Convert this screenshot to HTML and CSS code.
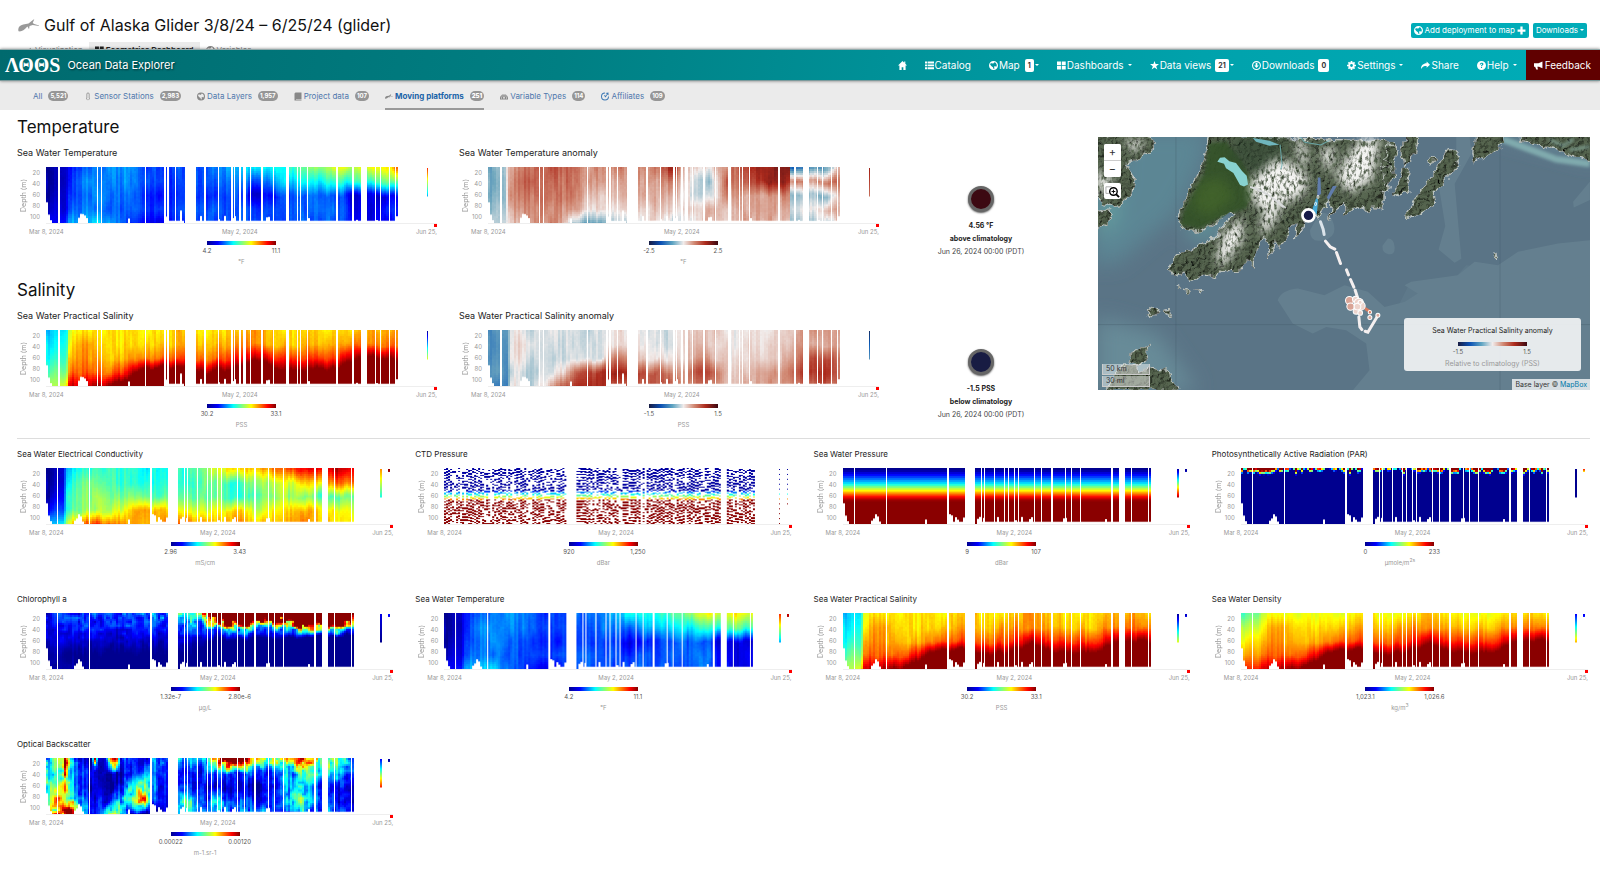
FILE: index.html
```html
<!DOCTYPE html>
<html lang="en">
<head>
<meta charset="utf-8">
<title>Gulf of Alaska Glider – Ocean Data Explorer</title>
<link rel="stylesheet" href="styles.css">
</head>
<body>
<svg class="sprite" aria-hidden="true">
  <symbol id="i-glider" viewBox="0 0 40 24"><path d="M1 23C-1 17 3 11 10 10l10-2 9-7 2-1-3 7 3 2 9 3v1l-12-2-6 2-1 6-3-5-2 2c-4 5-9 8-15 7z"/></symbol>
  <symbol id="i-home" viewBox="0 0 16 16"><path d="M8 0L0 8h2.500v8h4v-5h3v5h4V8H16l-3-3V1h-2v2z"/></symbol>
  <symbol id="i-list" viewBox="0 0 16 16"><path d="M0 1h4v3.500H0zM5 1h11v3.500H5zM0 6h4v3.500H0zM5 6h11v3.500H5zM0 11h4v3.500H0zM5 11h11v3.500H5z"/></symbol>
  <symbol id="i-globe" viewBox="0 0 16 16"><path fill-rule="evenodd" d="M8 0a8 8 0 100 16A8 8 0 008 0zm1 2l3 1 2 4-1 3-3-1-1 2 1 2-2 1-1-3-3-2-2-3 1-2 3 0 1 1 2-2z"/></symbol>
  <symbol id="i-grid" viewBox="0 0 16 16"><path d="M0 1h7v6.500H0zM8.500 1h7v6.500h-7zM0 9h7v6H0zM8.500 9h7v6h-7z"/></symbol>
  <symbol id="i-star" viewBox="0 0 16 16"><path d="M8 0l2 5.500h6l-5 3.700 2 6L8 11.500 3 15.200l2-6-5-3.700h6z"/></symbol>
  <symbol id="i-down" viewBox="0 0 16 16"><path fill-rule="evenodd" d="M8 0a8 8 0 100 16A8 8 0 008 0zm0 2a6 6 0 110 12A6 6 0 018 2zM6.500 3.500v4.500H4l4 4.500L12 8H9.500V3.500z"/></symbol>
  <symbol id="i-gear" viewBox="0 0 16 16"><path fill-rule="evenodd" d="M6.500 0h3v2.200l1.300.6 1.600-1.600 2.200 2.200L13 5l.6 1.500H16v3h-2.400L13 11l1.600 1.600-2.200 2.200-1.600-1.600-1.300.6V16h-3v-2.200l-1.300-.6-1.600 1.600-2.200-2.200L3 11l-.6-1.500H0v-3h2.400L3 5 1.400 3.400l2.200-2.200 1.600 1.600 1.300-.6zM8 5.500a2.500 2.500 0 100 5 2.500 2.500 0 000-5z"/></symbol>
  <symbol id="i-share" viewBox="0 0 16 16"><path d="M10 1l6 5.500-6 5.500V9C5 9 3 10 0 14c0-6 4-10 10-10z"/></symbol>
  <symbol id="i-help" viewBox="0 0 16 16"><path fill-rule="evenodd" d="M8 0a8 8 0 100 16A8 8 0 008 0zM5 6c0-4 6.500-4 6.500-.5 0 2-2.500 2-2.500 4H7C7 7 9 7 9 5.700c0-1.200-2-1.200-2 .3zm2 4.500h2v2H7z"/></symbol>
  <symbol id="i-horn" viewBox="0 0 16 16"><path d="M15 1v12l-6-3H6l1 5H4l-2-5H0V4h8z"/></symbol>
  <symbol id="i-plus" viewBox="0 0 16 16"><path d="M6 1h4v5h5v4h-5v5H6v-5H1V6h5z"/></symbol>
  <symbol id="i-thermo" viewBox="0 0 16 16"><path fill-rule="evenodd" d="M5 3a3 3 0 016 0v7a3.500 3.500 0 11-6 0zm1.500 0v8a2 2 0 103 0V3a1.500 1.500 0 00-3 0z"/></symbol>
  <symbol id="i-book" viewBox="0 0 16 16"><path d="M3 0h12v13H4v1h11v2H1V2z"/></symbol>
  <symbol id="i-gauge" viewBox="0 0 16 16"><path fill-rule="evenodd" d="M0 14C-2 0 18 0 16 14zM7 4h2v2H7zM3 6h2v2H3zM11 6h2v2h-2zM7 8h2l1 4H6zM2 10h2v2H2zM12 10h2v2h-2z"/></symbol>
  <symbol id="i-clock" viewBox="0 0 16 16"><path fill-rule="evenodd" d="M8 0a8 8 0 108 8h-2a6 6 0 11-6-6zM9 1l6-1v6l-2-2-4 6-3-4 2-1 1 2 3-4z"/></symbol>
</svg>

<header class="page-head">
  <svg class="glider"><use href="#i-glider"/></svg>
  <h1>Gulf of Alaska Glider 3/8/24 – 6/25/24 (glider)</h1>
  <div class="actions">
    <button class="action"><svg class="ico"><use href="#i-globe"/></svg>Add deployment to map<svg class="ico"><use href="#i-plus"/></svg></button>
    <button class="action">Downloads<i class="caret"></i></button>
  </div>
</header>
<nav class="tabs">
  <a href="#vis"><svg class="ico"><use href="#i-glider"/></svg>Visualization</a>
  <a href="#eco" class="on"><svg class="ico"><use href="#i-grid"/></svg>Ecometrics Dashboard</a>
  <a href="#var"><svg class="ico"><use href="#i-globe"/></svg>Variables</a>
</nav>

<nav class="navbar">
  <a class="brand" href="#home"><span class="logo">ΛΘΘS</span>Ocean Data Explorer</a>
  <div class="menu">
    <a href="#home" aria-label="Home"><svg class="ico"><use href="#i-home"/></svg></a>
    <a href="#catalog"><svg class="ico"><use href="#i-list"/></svg>Catalog</a>
    <a href="#map"><svg class="ico"><use href="#i-globe"/></svg>Map<b class="num far">1</b><i class="caret"></i></a>
    <a href="#dash"><svg class="ico"><use href="#i-grid"/></svg>Dashboards<i class="caret gap"></i></a>
    <a href="#views"><svg class="ico"><use href="#i-star"/></svg>Data views<b class="num">21</b><i class="caret"></i></a>
    <a href="#dl"><svg class="ico"><use href="#i-down"/></svg>Downloads<b class="num">0</b></a>
    <a href="#set"><svg class="ico"><use href="#i-gear"/></svg>Settings<i class="caret gap"></i></a>
    <a href="#share"><svg class="ico"><use href="#i-share"/></svg>Share</a>
    <a href="#help"><svg class="ico"><use href="#i-help"/></svg>Help<i class="caret gap"></i></a>
    <a href="#feedback" class="feedback"><svg class="ico"><use href="#i-horn"/></svg>Feedback</a>
  </div>
</nav>

<nav class="subnav">
  <a href="#all">All<b>5,521</b></a>
  <a href="#sensor"><svg class="ico"><use href="#i-thermo"/></svg>Sensor Stations<b>2,983</b></a>
  <a href="#layers"><svg class="ico"><use href="#i-globe"/></svg>Data Layers<b>1,957</b></a>
  <a href="#project"><svg class="ico"><use href="#i-book"/></svg>Project data<b>107</b></a>
  <a href="#moving" class="on"><svg class="ico"><use href="#i-glider"/></svg>Moving platforms<b>251</b></a>
  <a href="#types"><svg class="ico"><use href="#i-gauge"/></svg>Variable Types<b>114</b></a>
  <a href="#affil"><svg class="ico clock"><use href="#i-clock"/></svg>Affiliates<b>109</b></a>
</nav>

<main>
  <div class="overview">
    <div class="sections">
      <section>
        <h2>Temperature</h2>
        <div class="pair">
          <figure class="chart" data-key="temp" data-large></figure>
          <figure class="chart" data-key="tempAnom" data-large></figure>
          <div class="stat"><span class="dot warm"></span><strong>4.56 °F</strong><strong>above climatology</strong><span>Jun 26, 2024 00:00 (PDT)</span></div>
        </div>
      </section>
      <section>
        <h2>Salinity</h2>
        <div class="pair">
          <figure class="chart" data-key="sal" data-large></figure>
          <figure class="chart" data-key="salAnom" data-large></figure>
          <div class="stat"><span class="dot cold"></span><strong>-1.5 PSS</strong><strong>below climatology</strong><span>Jun 26, 2024 00:00 (PDT)</span></div>
        </div>
      </section>
    </div>

    <div class="map">
      <svg class="chartmap" viewBox="24 21 1479 758" preserveAspectRatio="xMidYMid slice" role="img" aria-label="Glider track in the Gulf of Alaska">
        <defs>
          <filter id="relief" x="0" y="0" width="100%" height="100%">
            <feTurbulence type="fractalNoise" baseFrequency=".09" numOctaves="4" seed="7" result="n"/>
            <feDiffuseLighting in="n" surfaceScale="9" diffuseConstant="1.100" lighting-color="#fff" result="l"><feDistantLight azimuth="215" elevation="50"/></feDiffuseLighting>
            <feComposite in="l" in2="SourceGraphic" operator="in" result="m"/>
            <feBlend in="m" in2="SourceGraphic" mode="multiply"/>
          </filter>
          <filter id="coast" x="-5%" y="-5%" width="110%" height="110%">
            <feTurbulence type="fractalNoise" baseFrequency=".04" numOctaves="3" seed="3"/>
            <feDisplacementMap in="SourceGraphic" scale="26" xChannelSelector="R" yChannelSelector="G"/>
          </filter>
          <filter id="snow" x="-10%" y="-10%" width="120%" height="120%">
            <feGaussianBlur in="SourceGraphic" stdDeviation="14" result="b"/>
            <feTurbulence type="fractalNoise" baseFrequency=".11 .06" numOctaves="4" seed="12" result="t"/>
            <feColorMatrix in="t" values="0 0 0 0 1  0 0 0 0 1  0 0 0 0 1  3 0 0 0 -.7" result="a"/>
            <feComposite in="b" in2="a" operator="in"/>
          </filter>
          <filter id="soft" x="-20%" y="-20%" width="140%" height="140%"><feGaussianBlur stdDeviation="18"/></filter>
          <filter id="haze" x="-20%" y="-40%" width="140%" height="180%"><feGaussianBlur stdDeviation="4"/></filter>
          <filter id="softer" x="-30%" y="-30%" width="160%" height="160%"><feGaussianBlur stdDeviation="30"/></filter>
          <clipPath id="kenai"><path d="M362 21l-12 45-12 50-38 60-15 40-20 50 12 30 50 8 60-30 35-28 20 6-46 40-20 35-50 22-65 26-20 40 12 28 60 8 80 0 40-60 40-10 40-80 60-50 60-30 40-30 30 10 40-25 40 10 30-30 50 30 45-30-30-110 40-75z"/></clipPath>
        </defs>
        <rect x="24" y="21" width="1479" height="758" fill="#5a7486"/>
        <g filter="url(#softer)">
          <path d="M100 0h260l-20 100-80 150-180 150-70 0 10-150 70-80z" fill="#5b8694"/>
          <path d="M24 560l180 50 120 170H24zM1180 0h340v90z" fill="#688b98"/>
          <path d="M20 200l60-30 10 100-70 60zM280 290l110-30 20 30-80 40z" fill="#639c9f"/>
        </g>
        <g fill="#6f8b98" opacity=".5">
          <path d="M565 510q10-30 60-35l80 20 60-30 70 20 50 45 60-15 40-25-40-25 20-10 140-20 50-40 70 10 60-40 120-25 100-10v450H790l50-60-10-80-60-40-60-10-40 20-60-30z"/>
          <path d="M960 460l130-10 40-45 90 10 90-25 190-20v410H880l40-120-30-60z" opacity=".45"/>
          <path d="M1040 120l60-50 0-49 40 0 5 50-50 90 20 225-20 12-48-40 20-70zM895 325q18 0 20 25t-18 22-18-25zM690 250q30-10 42 30t-30 50-40-30zM1450 215l50-60v55l-48 22z"/>
          <path d="M1230 440l60-15 120 30 90-20v340h-450l80-120z" opacity=".35"/>
        </g>
        <path d="M260 21v758M1231 21v758M24 583h1479" stroke="#3f5664" stroke-width="2" opacity=".45" fill="none"/>
        <path d="M1240 28l90 34 70 26 100 14" stroke="#8fc0bd" stroke-width="20" fill="none" opacity=".7" filter="url(#haze)"/>
        <g filter="url(#coast)" stroke="#b9c1bb" stroke-width="3">
          <g filter="url(#relief)" fill="#56654f">
            <path d="M15 15h170l8 38-44 35-40 15 28 45-12 48-35 32-50-5-25-45zM15 245l50-5-8 40-42 28z"/>
            <path d="M362 15l-12 50-12 50-38 60-15 40-20 50 12 30 50 8 60-30 35-28 20 6-46 40-20 35-50 22-65 26-18 40 10 22 32-5 14 22 40-16 45 5 15-18 30-15 15 20 32-45 18 25 2-40 28-48 18 18-5 50 25-65 2 30 25-30 10-35 22-5-5 40 28-30 4-35 25-12 8-30 4 45 30-50 10 20-5 40 16-30 30-25 0 35 50-25 20 20 14-20 30 10 0-50 18-10-3-35 20-20 2-66-6-20z"/>
            <path d="M895 40l30 25-10 35-30-15zM940 30l45-20-4 50-34 50-12-35zM875 100l28 15 10 30-28 20zM940 120l20-5-10 45 8 20-28 18-18-10 18-30zM1015 98l20-16 5 8-22 14z"/>
            <path d="M945 254l20-24 30-50 20-22 24-46 36-52 18 0 18 22-18 36-42 52-18 16 5 40-48 26-35 14zM1152 45l8-30h80l-2 25-50 40-34 18-4-30zM1290 10h230v84l-60-14-60-20-54-18-50-14z"/>
            <path d="M125 670l55-24-10 40-25 22-25-14zM50 779l20-40 30-35 40 5 10 20 40-15 50 10 5 30 30 25z"/>
            <path d="M175 545l18-12 20 8-18 16zM228 540l12-2 3 16-12 0zM262 470l12 3-8 4zM284 478l16 4-10 8zM322 478l16 2-8 8zM1210 380l8-14 5 4-9 14z"/>
          </g>
        </g>
        <g clip-path="url(#kenai)">
          <path d="M360 40l-15 90-60 110-10 45 55 10 80-40 60-20 30-60-40-80-50-60z" fill="#36532b" opacity=".93" filter="url(#haze)"/>
          <path d="M330 160l60-20 50 60-80 60-50-30z" fill="#496d2c" opacity=".55" filter="url(#soft)"/>
          <path d="M440 15h150l-10 80-80 50-80-60z" fill="#334630" opacity=".6" filter="url(#soft)"/>
        </g>
        <g filter="url(#snow)" fill="#f4f4f2">
          <path d="M560 85l60 20 40 40-20 50-60 30-40 30-50-40-10-60z"/>
          <path d="M540 110l100 30-20 50-70 30-60-50z"/>
          <path d="M770 80l50-60 50 10-20 120-70 40-40-50z"/>
          <path d="M780 70l90-40-20 110-60 30z"/>
          <path d="M400 310l60-50 0 70-60 80-20-20zM520 250l60-10-50 70-20 0z"/>
          <path d="M410 300l50-20-20 60-60 60z"/>
          <path d="M24 120l50 20-30 50-20 0zM100 30l70 0-30 40zM620 40l20-20 20 90-30-20zM690 60l50-10-20 90z"/>
        </g>
        <path d="M384 95l8-12 14-1 14 12 20 5 18 24 14 14 4 26-12 6-12-4-20-36-22-14-6-14z" fill="#88d2d0"/>
        <path d="M490 24l50 8 30 12-30 3-40-12z" fill="#6fb6bd"/>
        <path d="M572 44l6 60-4 14M632 21l14 16 48 8 26-14" stroke="#6fb6bd" stroke-width="3" fill="none" opacity=".8"/>
        <path d="M482 168q50 12 110 66l-14-2q-40-42-96-58z" fill="#d8dadb"/>
        <path d="M685 142l8 0 2 50-12 8zM730 168l12 0-24 42-6-8z" fill="#607cab"/>
        <path d="M1380 30l40 18 30-20M1440 60l60-10" stroke="#94c0b8" stroke-width="8" fill="none" opacity=".6" filter="url(#haze)"/>
        <path d="M668 240l12-36 6 4-4 45z" fill="#47a9d5"/>
        <g fill="none" stroke="#fff" stroke-width="2.500"><rect x="683" y="196" width="5" height="9" rx="2"/><rect x="676" y="217" width="5" height="9" rx="2"/></g>
        <g fill="none" stroke="#f4efef" stroke-width="9" stroke-linecap="round">
          <path d="M693 275l8 22 3 16" stroke="#dbe4ea"/>
          <path d="M708 333l14 17 14 7M741 367l12 33M771 419l6 15M783 448l10 23M797 480l8 25M808 560l3 30 6 8M865 556l-30 50-8-3"/>
          <path d="M829 536l12 8" stroke="#d77c61"/>
        </g>
        <g fill="#eed4cc" stroke="#fff" stroke-width="3">
          <circle cx="780" cy="511" r="12" fill="#d9a496"/><circle cx="783" cy="529" r="11" fill="#d9a496"/>
          <circle cx="798" cy="507" r="9"/><circle cx="808" cy="518" r="14"/><circle cx="814" cy="527" r="13"/><circle cx="800" cy="543" r="9"/><circle cx="804" cy="529" r="10"/><circle cx="812" cy="548" r="7"/><circle cx="812" cy="516" r="6"/>
          <circle cx="841" cy="546" r="5" fill="#d77c61"/><circle cx="841" cy="562" r="6" fill="#dca99e"/><circle cx="865" cy="555" r="6" fill="#dca99e"/>
        </g>
        <circle cx="657" cy="256" r="18" fill="#161a48" stroke="#fff" stroke-width="8"/>
      </svg>
      <div class="map-tools">
        <div class="zoomer"><button aria-label="Zoom in">+</button><button aria-label="Zoom out">−</button></div>
        <button class="extent" aria-label="Zoom to extent"><svg viewBox="0 0 16 16"><path d="M1 3h6M1 3v7h3" fill="none" stroke="#aaa"/><circle cx="9" cy="8" r="4" fill="#fff" stroke="#000" stroke-width="1.500"/><path d="M12 11l3 3" stroke="#000" stroke-width="2"/><path d="M7 8h4M9 6v4" stroke="#000"/></svg></button>
      </div>
      <div class="scales"><span>50 km</span><span>30 mi</span></div>
      <div class="map-key"><span class="key-title">Sea Water Practical Salinity anomaly</span><span class="bar balance"></span><span class="ends"><span>-1.5</span><span>1.5</span></span><span class="key-unit">Relative to climatology (PSS)</span></div>
      <div class="credit">Base layer © <a href="#mapbox">MapBox</a></div>
    </div>
  </div>

  <div class="grid">
    <figure class="chart" data-key="cond"></figure>
    <figure class="chart" data-key="ctd"></figure>
    <figure class="chart" data-key="press"></figure>
    <figure class="chart" data-key="par"></figure>
    <figure class="chart" data-key="chl"></figure>
    <figure class="chart" data-key="temp"></figure>
    <figure class="chart" data-key="sal"></figure>
    <figure class="chart" data-key="dens"></figure>
    <figure class="chart" data-key="back"></figure>
  </div>
</main>
<script src="charts.js"></script>
</body>
</html>
```
FILE: styles.css
```css
* { box-sizing: border-box; }
body { margin: 0; background: #fff; color: #222; font-family: Inter, "Open Sans", sans-serif; font-size: 8px; }
a { color: inherit; text-decoration: none; }
button { font: inherit; border: 0; cursor: pointer; }
h1, h2, figure { margin: 0; font-weight: 400; }
.sprite { position: absolute; width: 0; height: 0; }
.ico { width: 9px; height: 9px; fill: currentColor; flex: none; }
.caret { border: 2px solid transparent; border-top-color: currentColor; border-bottom: 0; }

.page-head { display: flex; align-items: center; height: 42px; padding: 8px 13px 0 18px; }
.page-head h1 { font-size: 16px; line-height: 20px; color: #111; }
.glider { width: 21px; height: 13px; margin-right: 5px; fill: #999; }
.actions { display: flex; gap: 4px; margin-left: auto; padding-top: 10px; }
.action { display: flex; align-items: center; gap: 2px; height: 15px; padding: 0 3px; border-radius: 2px; background: #00acb8; color: #fff; font-size: 8px; }
.tabs { display: flex; height: 16px; padding-left: 18px; color: #888; font-size: 8px; }
.tabs a { display: flex; align-items: center; gap: 2px; padding: 0 6px; }
.tabs .on { background: #ebebeb; color: #222; font-weight: 600; }

.navbar { position: relative; display: flex; justify-content: space-between; height: 32px; margin-top: -9px; border-top: 1px solid #8fa9aa; border-bottom: 1px solid #7c9a9c; background: linear-gradient(100deg, #006a6e, #007f83 35%, #00a2ac 75%, #00adb8); color: #fff; box-shadow: 0 0 3px rgba(0, 0, 0, .5); }
.brand { display: flex; align-items: center; gap: 7px; padding-left: 5px; font-size: 11px; text-shadow: 1px 1px 2px rgba(0, 0, 0, .6); }
.logo { font: 700 20px "Liberation Serif", serif; text-shadow: none; }
.menu { display: flex; font-size: 10px; }
.menu a { display: flex; align-items: center; gap: 1px; padding: 0 9px; }
.num { padding: 0 3px; margin-left: 3px; border-radius: 2px; background: #fff; color: #333; font-size: 7px; line-height: 13px; }
.num.far { margin-left: 4px; }
.caret.gap { margin-left: 3px; }
.menu .feedback { gap: 2px; padding: 0 9px 0 8px; background: #600000; }

.subnav { display: flex; gap: 16px; height: 29px; padding-left: 33px; background: #ebebeb; color: #4f78ad; font-size: 8px; }
.subnav a { display: flex; align-items: center; gap: 2px; padding-top: 3px; border-bottom: 2px solid transparent; }
.subnav .ico { width: 8px; fill: #888; }
.subnav .clock { fill: #3c78b4; }
.subnav b { margin-left: 4px; padding: 0 2px; border-radius: 5px; background: #969696; color: #fff; font-size: 6px; line-height: 10px; }
.subnav .on { border-color: #999; color: #1a63a8; font-weight: 700; }

main { padding: 7px 10px 20px 17px; }
.overview { display: grid; grid-template-columns: 1081fr 492fr; padding-bottom: 8px; border-bottom: 1px solid #ddd; }
.sections { display: grid; gap: 13px; }
h2 { font-size: 17px; line-height: 20px; margin-bottom: 9px; color: #111; }
.pair { display: grid; grid-template-columns: 442fr 442fr 197fr; }
.grid { display: grid; grid-template-columns: repeat(4, 1fr); gap: 24px 20px; padding-top: 8px; }

.chart { display: flex; flex-direction: column; min-width: 0; padding-right: 2px; }
.chart figcaption { height: 21px; font-size: 8px; line-height: 14px; white-space: nowrap; }
.chart[data-large] { padding-right: 22px; }
.chart[data-large] figcaption { font-size: 9px; }
.plot { position: relative; display: flex; height: 57px; }
.depth { width: 13px; color: #999; font-size: 7px; line-height: 13px; text-align: center; writing-mode: vertical-rl; transform: rotate(180deg); }
.ticks { display: flex; flex-direction: column; width: 16px; padding-right: 6px; color: #999; font-size: 6px; line-height: 11px; text-align: right; }
.plot canvas { display: block; flex: 1; min-width: 0; height: 57px; border-bottom: 1px solid #eee; }
.end { position: absolute; right: 0; bottom: -3px; width: 3px; height: 3px; background: #f00; }
.dates { display: flex; justify-content: space-between; padding-left: 12px; margin: 3px 0 4px; color: #999; font-size: 6px; line-height: 10px; }
.legend { display: flex; flex-direction: column; align-items: center; height: 26px; color: #999; font-size: 6px; line-height: 10px; }
.chart[data-large] .legend { padding-left: 29px; }
.bar { width: 69px; height: 4px; background: linear-gradient(90deg, #00008f, #00f 16%, #0ff 38%, #ff0 64%, #f00 88%, #800000); }
.balance { background: linear-gradient(90deg, #181c43, #0b50b4 17%, #5ea4c2 34%, #f1eceb 50%, #d08670 66%, #ac2a1c 82%, #3c0912); }
.ends { display: grid; grid-template-columns: 69px 69px; margin: 1px 0; color: #555; text-align: center; }
.legend sup { font-size: 5px; line-height: 1px; }

.stat { display: flex; flex-direction: column; align-items: center; padding: 40px 37px 0 0; color: #444; font-size: 7px; line-height: 13px; white-space: nowrap; }
.stat strong { color: #222; }
.dot { width: 26px; height: 26px; margin-bottom: 7px; border: 3px solid #666; border-radius: 50%; box-shadow: 0 1px 2px #555; }
.warm { background: #3c0912; }
.cold { background: #181c43; }

.map { position: relative; height: 253px; margin-top: 20px; overflow: hidden; }
.chartmap { display: block; width: 100%; height: 100%; }
.map-tools { position: absolute; left: 6px; top: 7px; width: 17px; }
.map-tools button { display: block; width: 17px; height: 16px; padding: 0; background: #fff; color: #333; font-size: 11px; line-height: 16px; }
.zoomer { display: grid; gap: 1px; border-radius: 2px; background: #ccc; overflow: hidden; }
.map-tools .extent { margin-top: 6px; border-radius: 2px; }
.extent svg { display: block; width: 15px; height: 15px; margin-left: 1px; }
.scales { position: absolute; left: 4px; bottom: 3px; display: grid; gap: 1px; width: 48px; color: #333; font-size: 7px; line-height: 10px; }
.scales span { padding-left: 3px; border: 1px solid #ccc; border-top: 0; background: rgba(255, 255, 255, .45); }
.map-key { position: absolute; right: 9px; bottom: 19px; display: flex; flex-direction: column; align-items: center; width: 177px; height: 53px; padding-top: 8px; border-radius: 3px; background: rgba(240, 242, 243, .93); font-size: 6px; line-height: 10px; }
.key-title { margin-bottom: 6px; font-size: 7px; line-height: 10px; }
.key-unit { margin-top: 1px; color: #999; font-size: 7px; }
.credit { position: absolute; right: 0; bottom: 0; padding: 0 3px; background: rgba(255, 255, 255, .75); color: #333; font-size: 7px; line-height: 11px; }
.credit a { color: #0078a8; }
```
FILE: charts.js
```js
// Each profile row is [time 0..1, value at five evenly spaced depths].
// "strips" are the value ranges of the two short casts at the end of the record.
const TEMP = [
  [0, .02, .02, .03, .06, .12], [.048, .02, .02, .04, .08, .14], [.056, .12, .12, .14, .2, .27], [.1, .25, .25, .23, .26, .3],
  [.13, .25, .25, .27, .23, .35], [.2, .27, .27, .24, .22, .19], [.26, .2, .21, .15, .16, .14], [.3, .18, .19, .16, .17, .12],
  [.4, .22, .2, .17, .22, .19], [.49, .3, .25, .2, .2, .18], [.53, .37, .2, .08, .18, .2], [.6, .4, .34, .19, .2, .2],
  [.7, .52, .38, .23, .22, .2], [.76, .62, .42, .2, .25, .23], [.78, .58, .42, .08, .11, .14], [.83, .62, .46, .1, .1, .1],
  [.875, .62, .46, .1, .15, .12], [.9, .78, .46, .12, .15, .12]];
const SAL = [
  [0, .33, .35, .4, .46, .54], [.05, .31, .36, .4, .5, .6], [.057, .58, .6, .66, .76, .9], [.09, .68, .71, .75, .8, .92],
  [.15, .65, .67, .7, .76, 1], [.2, .65, .67, .72, .88, 1.15], [.25, .65, .67, .74, 1.08, 1.3], [.3, .65, .69, .8, 1.14, 1.3],
  [.35, .7, .73, .82, 1.14, 1.3], [.4, .65, .68, .76, 1.02, 1.2], [.5, .68, .75, .87, 1.12, 1.2], [.53, .74, .75, .98, 1.3, 1.3],
  [.6, .67, .7, .84, 1.04, 1.2], [.72, .65, .69, .82, 1.06, 1.3], [.8, .7, .76, 1.02, 1.3, 1.3], [.86, .7, .76, 1.06, 1.3, 1.3], [.9, .7, .75, .96, 1.2, 1.3]];
const VARS = {
  temp: { title: 'Sea Water Temperature', lo: '4.2', hi: '11.1', unit: '°F', rows: TEMP, noise: .05, strips: [[.85, .3], [.95, .95]] },
  sal: { title: 'Sea Water Practical Salinity', lo: '30.2', hi: '33.1', unit: 'PSS', rows: SAL, noise: .05, strips: [[0, .6], [.05, .1]] },
  tempAnom: { title: 'Sea Water Temperature anomaly', lo: '-2.5', hi: '2.5', unit: '°F', map: 'balance', noise: .06, strips: [[.85, .7], [.85, .7]], rows: [
    [0, .36, .34, .37, .38, .44], [.04, .35, .34, .33, .4, .44], [.052, .58, .6, .62, .62, .52], [.09, .72, .7, .68, .65, .62],
    [.17, .74, .72, .72, .66, .66], [.21, .7, .7, .68, .62, .44], [.25, .65, .64, .58, .51, .36], [.35, .66, .62, .58, .52, .42],
    [.43, .68, .62, .62, .56, .54], [.47, .84, .68, .58, .55, .4], [.5, .55, .52, .5, .5, .42], [.56, .52, .4, .45, .6, .6],
    [.61, .68, .74, .66, .56, .56], [.66, .76, .7, .6, .6, .6], [.7, .84, .84, .62, .6, .6], [.768, .9, .86, .68, .64, .6],
    [.772, .2, .66, .4, .48, .4], [.83, .26, .66, .4, .52, .42], [.87, .36, .68, .4, .58, .44], [.9, .6, .7, .6, .6, .55]] },
  salAnom: { title: 'Sea Water Practical Salinity anomaly', lo: '-1.5', hi: '1.5', unit: 'PSS', map: 'balance', noise: .045, strips: [[.05, .3], [.1, .1]], rows: [
    [0, .3, .28, .3, .32, .27], [.048, .27, .26, .25, .28, .24], [.054, .47, .47, .48, .45, .48], [.08, .53, .53, .53, .5, .5],
    [.1, .46, .46, .45, .4, .4], [.14, .48, .47, .46, .46, .52], [.18, .47, .47, .47, .52, .7], [.23, .45, .46, .46, .74, .84],
    [.29, .47, .47, .48, .8, .86], [.32, .52, .55, .72, .86, .72], [.4, .5, .5, .54, .76, .72], [.46, .45, .46, .52, .7, .76],
    [.5, .54, .54, .53, .6, .6], [.54, .56, .6, .68, .82, .72], [.58, .58, .56, .58, .7, .66], [.62, .5, .52, .53, .54, .56],
    [.7, .5, .52, .54, .6, .62], [.76, .55, .56, .6, .68, .66], [.8, .64, .63, .72, .8, .7], [.86, .62, .6, .8, .82, .75], [.9, .6, .6, .68, .68, .66]] },
  cond: { title: 'Sea Water Electrical Conductivity', lo: '2.96', hi: '3.43', unit: 'mS/cm', noise: .055, strips: [[.75, .4], [.98, .98]], rows: [
    [0, .01, .02, .04, .12, .3], [.047, .03, .05, .1, .2, .36], [.058, .28, .32, .38, .42, .55], [.1, .44, .46, .5, .52, .76],
    [.15, .44, .48, .54, .54, .82], [.2, .42, .45, .52, .6, .74], [.26, .4, .41, .5, .7, .73], [.3, .38, .4, .46, .7, .73],
    [.4, .42, .42, .46, .6, .78], [.5, .62, .5, .5, .62, .7], [.54, .64, .38, .38, .7, .74], [.6, .7, .54, .48, .56, .68],
    [.68, .8, .6, .55, .66, .72], [.76, .88, .66, .5, .72, .74], [.79, .9, .68, .42, .62, .68], [.86, .93, .78, .5, .66, .68], [.9, .95, .8, .52, .6, .68]] },
  ctd: { title: 'CTD Pressure', lo: '920', hi: '1,250', unit: 'dBar', dots: true, noise: 0, rows: [], strips: [[0, 1], [0, 1]] },
  press: { title: 'Sea Water Pressure', lo: '9', hi: '107', unit: 'dBar', noise: 0, strips: [[0, .95], [0, .05]], rows: [[0, -.02, .34, .88, 1.3, 1.6], [1, -.02, .34, .88, 1.3, 1.6]] },
  par: { title: 'Photosynthetically Active Radiation (PAR)', lo: '0', hi: '233', unit: 'μmole/m<sup>2s</sup>', surface: true, noise: 0, strips: [[0, 0], [.9, .6]], rows: [[0, 0, 0, 0, 0, 0], [1, 0, 0, 0, 0, 0]] },
  chl: { title: 'Chlorophyll a', lo: '1.32e-7', hi: '2.80e-6', unit: 'μg/L', noise: .04, rough: 1.2, strips: [[.1, 0], [.15, .1]], rows: [
    [0, .12, .1, .06, .02, .04], [.1, .19, .14, .06, 0, 0], [.2, .17, .14, .06, -.03, -.04], [.3, .28, .16, .06, -.03, -.03],
    [.35, .32, .16, .07, -.03, -.03], [.43, .4, .2, .03, -.03, -.03], [.46, .9, .15, .02, -.03, -.03], [.5, 2.3, .3, -.1, -.05, -.05],
    [.55, 2.4, .4, -.1, -.05, -.05], [.6, 2.4, .4, -.1, -.05, -.05], [.68, 2, .3, -.1, -.05, -.05], [.76, 3.2, .7, -.4, -.05, -.05], [.83, 3, .6, -.4, -.05, -.05], [.87, 2, .4, -.3, -.05, -.05], [.9, .5, .25, -.05, -.05, -.05]] },
  dens: { title: 'Sea Water Density', lo: '1,023.1', hi: '1,026.6', unit: 'kg/m<sup>3</sup>', noise: .035, strips: [[.1, .7], [.1, .15]], rows: SAL.map(([t, ...v]) => t < .052 ? [t, .46, .56, .64, .72, .85] : [t, v[0] - .04, ...v.slice(1)]) },
  back: { title: 'Optical Backscatter', lo: '0.00022', hi: '0.00120', unit: 'm-1.sr-1', noise: .13, rough: .7, strips: [[.1, .85], [.02, .02]], rows: [
    [0, .4, .38, .45, .58, .65], [.045, .4, .4, .42, .66, .74], [.052, .85, .75, .62, .75, .82], [.065, .55, .3, .35, .6, 1.1],
    [.08, .2, .16, .18, .4, .75], [.13, .07, .06, .07, .1, .1], [.138, .8, .05, .06, .1, .1], [.148, .08, .05, .06, .1, .1], [.17, .12, .05, .05, .08, .5], [.2, 1.2, .06, .1, .34, .45],
    [.21, .15, .1, .15, .4, .4], [.24, .15, .12, .36, .38, .06], [.28, .1, .24, .56, .75, .06], [.3, .25, .25, .32, .16, .06], [.35, .28, .14, .08, .05, .04],
    [.4, .26, .12, .16, .42, .3], [.46, .4, .12, .1, .18, .2], [.49, .95, .25, .08, .35, .3], [.55, 1.3, .1, .06, .18, .15],
    [.6, .62, .25, .08, .12, .3], [.66, .6, .22, .14, .14, .15], [.73, .72, .4, .42, .5, .2], [.79, .6, .4, .14, .12, .2],
    [.84, .46, .3, .12, .2, .28], [.9, .3, .2, .15, .15, .2]] }
};
const MAPS = {
  jet: [[0, 0, 0, 143], [.125, 0, 0, 255], [.375, 0, 255, 255], [.63, 255, 255, 0], [.875, 255, 0, 0], [1, 138, 0, 0]],
  balance: [[0, 24, 28, 67], [.17, 11, 90, 184], [.34, 112, 168, 190], [.5, 241, 236, 235], [.66, 208, 134, 112], [.82, 172, 42, 28], [1, 60, 9, 18]]
};
const GAPS_SMALL = [[.031, .033], [.125, .128], [.302, .307], [.352, .381], [.4, .404], [.409, .413], [.436, .44], [.466, .469], [.477, .48], [.495, .499], [.507, .511], [.552, .556], [.574, .577], [.603, .608], [.642, .646], [.661, .665], [.686, .69], [.776, .781], [.799, .817], [.834, .838], [.882, .885]];
const GAPS_LARGE = [[.03, .034], [.131, .134], [.142, .145], [.253, .256], [.302, .306], [.311, .315], [.331, .334], [.357, .385], [.406, .411], [.442, .445], [.476, .48], [.483, .486], [.496, .502], [.507, .514], [.525, .527], [.551, .555], [.584, .587], [.615, .622], [.644, .647], [.653, .656], [.67, .673], [.744, .748], [.787, .791], [.81, .826], [.844, .847], [.858, .861], [.881, .884], [.895, .898]];

const hash = (x, y) => { const s = Math.sin(x * 127.1 + y * 311.7) * 43758.5453; return s - Math.floor(s); };
function smooth(x, y) {
  const i = Math.floor(x), j = Math.floor(y), u = x - i, v = y - j;
  return (hash(i, j) * (1 - u) + hash(i + 1, j) * u) * (1 - v) + (hash(i, j + 1) * (1 - u) + hash(i + 1, j + 1) * u) * v;
}
function color(name, v) {
  const m = MAPS[name || 'jet'];
  v = Math.max(0, Math.min(1, v));
  let k = 1;
  while (k < m.length - 1 && m[k][0] < v) k++;
  const a = m[k - 1], b = m[k], f = (v - a[0]) / (b[0] - a[0]);
  return `rgb(${[1, 2, 3].map(c => Math.round(a[c] + (b[c] - a[c]) * f)).join(',')})`;
}
function sample(rows, t, d) {
  let k = 1;
  while (k < rows.length - 1 && rows[k][0] < t) k++;
  const a = rows[k - 1], b = rows[k], f = Math.max(0, Math.min(1, (t - a[0]) / (b[0] - a[0])));
  const p = Math.min(3.999, d * 4), i = Math.floor(p), g = p - i;
  const at = n => a[n + 1] + (b[n + 1] - a[n + 1]) * f;
  return at(i) * (1 - g) + at(i + 1) * g;
}
function floor(t, c) {
  if (t < .004) return .63;
  if (t < .009) return .85;
  if (t < .015) return .95;
  if (t > .078 && t < .106) return .79 + Math.abs(t - .091) * 10 + hash(c, 5) * .08;
  if (t > .304 && t < .352) return hash(c, 2) > .6 ? .74 + hash(c, 3) * .2 : .96;
  if (t > .381) return t > .893 ? .88 : hash(c, 9) > .88 ? .87 + hash(c, 4) * .08 : .96;
  return hash(c, 8) > .97 ? .92 : 1;
}
const pressureDot = d => d < .4 ? .02 : d > .56 ? 1 : .25 + (d - .42) * 4;

function drawDots(g, w, h) {
  for (let x = 0, c = 0; x < w * .889; x += 2, c++) {
    const density = .66 + hash(c >> 3, 6) * .3 - (hash(c, 7) > .82 ? .5 : 0);
    for (let y = Math.floor(hash(c, 3) * 3); y < h; y += 3) {
      if (hash(c, y) > density) continue;
      g.fillStyle = color('jet', pressureDot(y / h));
      g.fillRect(x, y, 2, hash(y, c) > .4 ? 2 : 1);
    }
  }
}
function drawCells(g, w, h, v, last) {
  for (let x = 0, c = 0; x < w * last; x += 2, c++) {
    const t = x / w, end = floor(t, c), streak = hash(c, 1) - .5;
    for (let y = 0; y < h * end; y += 2) {
      const d = y / h, lift = (smooth(c / 2.5, 7) - .5) * .09 * (v.noise ? 1 : 0);
      let n = sample(v.rows, t, Math.max(0, d + lift));
      if (v.rough) n *= 1 + (smooth(c / 1.6, y / 4) - .5) * v.rough;
      n += v.noise * (streak * .8 + (smooth(c / 2.2, y / 14) - .5) * 1.4 + (hash(c, y) - .5) * .25);
      if (v.surface && y < 10) n = smooth(c / 1.5, 1) * 1.8 - y * .24 - .3 + hash(c, y) * .2;
      g.fillStyle = color(v.map, n);
      g.fillRect(x, y, 2, Math.min(2, h * end - y));
    }
  }
}
function draw(canvas, v, large) {
  const w = canvas.width = canvas.clientWidth, h = canvas.height = 57, g = canvas.getContext('2d');
  if (v.dots) drawDots(g, w, h);
  else drawCells(g, w, h, v, large ? .9 : .887);
  (large ? GAPS_LARGE : GAPS_SMALL).forEach(([a, b]) => {
    if (v.dots && b - a < .01) return;
    g.clearRect(Math.round(a * w * .996), 0, Math.max(1, Math.round((b - a) * w)), h);
  });
  const strip = (t, len, [from, to]) => {
    for (let y = 1; y < h * len; y += v.dots ? 5 : 1) {
      g.fillStyle = color(v.map, v.dots ? pressureDot(y / h) : from + (to - from) * y / (h * len));
      g.fillRect(Math.round(t * w), y, large || v.dots ? 1 : 2, 1);
    }
  };
  strip(large ? .974 : .962, v.dots ? 1 : .51, v.strips[0]);
  if (!large) strip(.987, v.dots ? .7 : .07, v.strips[1]);
}
document.querySelectorAll('.chart').forEach(el => {
  const v = VARS[el.dataset.key];
  el.innerHTML = `<figcaption>${v.title}</figcaption>
    <div class="plot"><span class="depth">Depth (m)</span>
      <div class="ticks"><span>20</span><span>40</span><span>60</span><span>80</span><span>100</span></div>
      <canvas></canvas><i class="end"></i></div>
    <div class="dates"><span>Mar 8, 2024</span><span>May 2, 2024</span><span>Jun 25,</span></div>
    <div class="legend"><span class="bar ${v.map || ''}"></span><span class="ends"><span>${v.lo}</span><span>${v.hi}</span></span><span>${v.unit}</span></div>`;
  draw(el.querySelector('canvas'), v, 'large' in el.dataset);
});
```
